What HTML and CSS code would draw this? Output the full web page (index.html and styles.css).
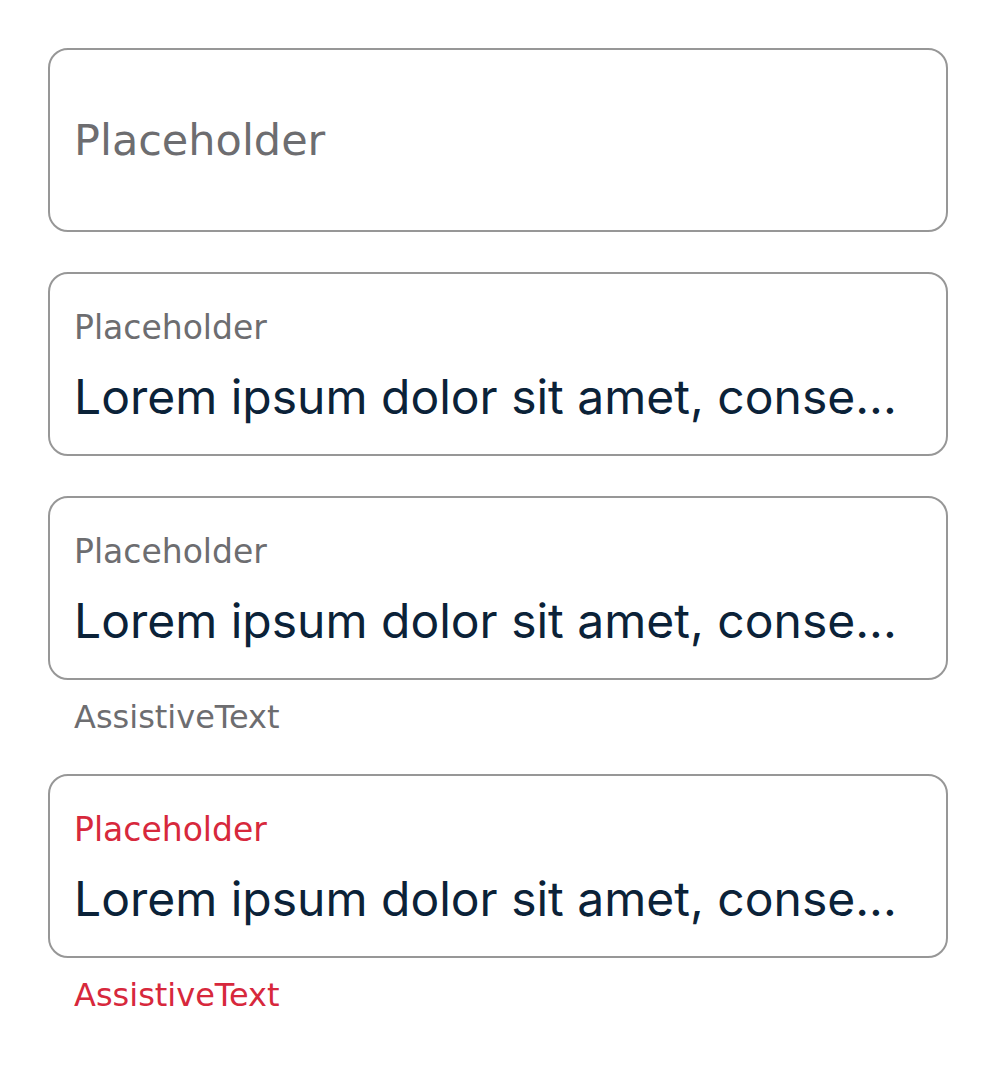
FILE: index.html
```html
<!DOCTYPE html>
<html>
<head>
<meta charset="utf-8">
<link rel="stylesheet" href="styles.css">
</head>
<body>
<div class="stack">
  <div class="field field-empty">
    <span class="placeholder">Placeholder</span>
  </div>
  <div class="group">
    <div class="field field-filled">
      <span class="label">Placeholder</span>
      <span class="value">Lorem ipsum dolor sit amet, conse...</span>
    </div>
  </div>
  <div class="group">
    <div class="field field-filled">
      <span class="label">Placeholder</span>
      <span class="value">Lorem ipsum dolor sit amet, conse...</span>
    </div>
    <div class="assistive">AssistiveText</div>
  </div>
  <div class="group error">
    <div class="field field-filled">
      <span class="label">Placeholder</span>
      <span class="value">Lorem ipsum dolor sit amet, conse...</span>
    </div>
    <div class="assistive">AssistiveText</div>
  </div>
</div>
</body>
</html>
```
FILE: styles.css
```css
html, body {
  margin: 0;
  padding: 0;
  background: #ffffff;
}
body {
  padding: 48px 48px 0 48px;
  font-family: "DejaVu Sans", "Open Sans", sans-serif;
}
.stack {
  display: flex;
  flex-direction: column;
  gap: 40px;
  width: 900px;
}
.group {
  display: flex;
  flex-direction: column;
}
.field {
  box-sizing: border-box;
  height: 184px;
  border: 2.5px solid #979797;
  border-radius: 20px;
  padding: 0 24px;
  display: flex;
  flex-direction: column;
  justify-content: center;
}
.field-filled {
  padding-top: 5px;
}
.placeholder {
  font-size: 43px;
  line-height: 44px;
  color: #6d6d70;
}
.label {
  font-size: 33px;
  line-height: 40px;
  color: #6d6d70;
}
.value {
  font-family: Inter, Roboto, "Liberation Sans", sans-serif;
  font-size: 48px;
  line-height: 58px;
  margin-top: 20px;
  color: #0b2238;
  white-space: nowrap;
}
.assistive {
  font-size: 32px;
  line-height: 34px;
  padding: 20px 26px 0;
  color: #6d6d70;
}
.error .label,
.error .assistive {
  color: #d7283c;
}
```
